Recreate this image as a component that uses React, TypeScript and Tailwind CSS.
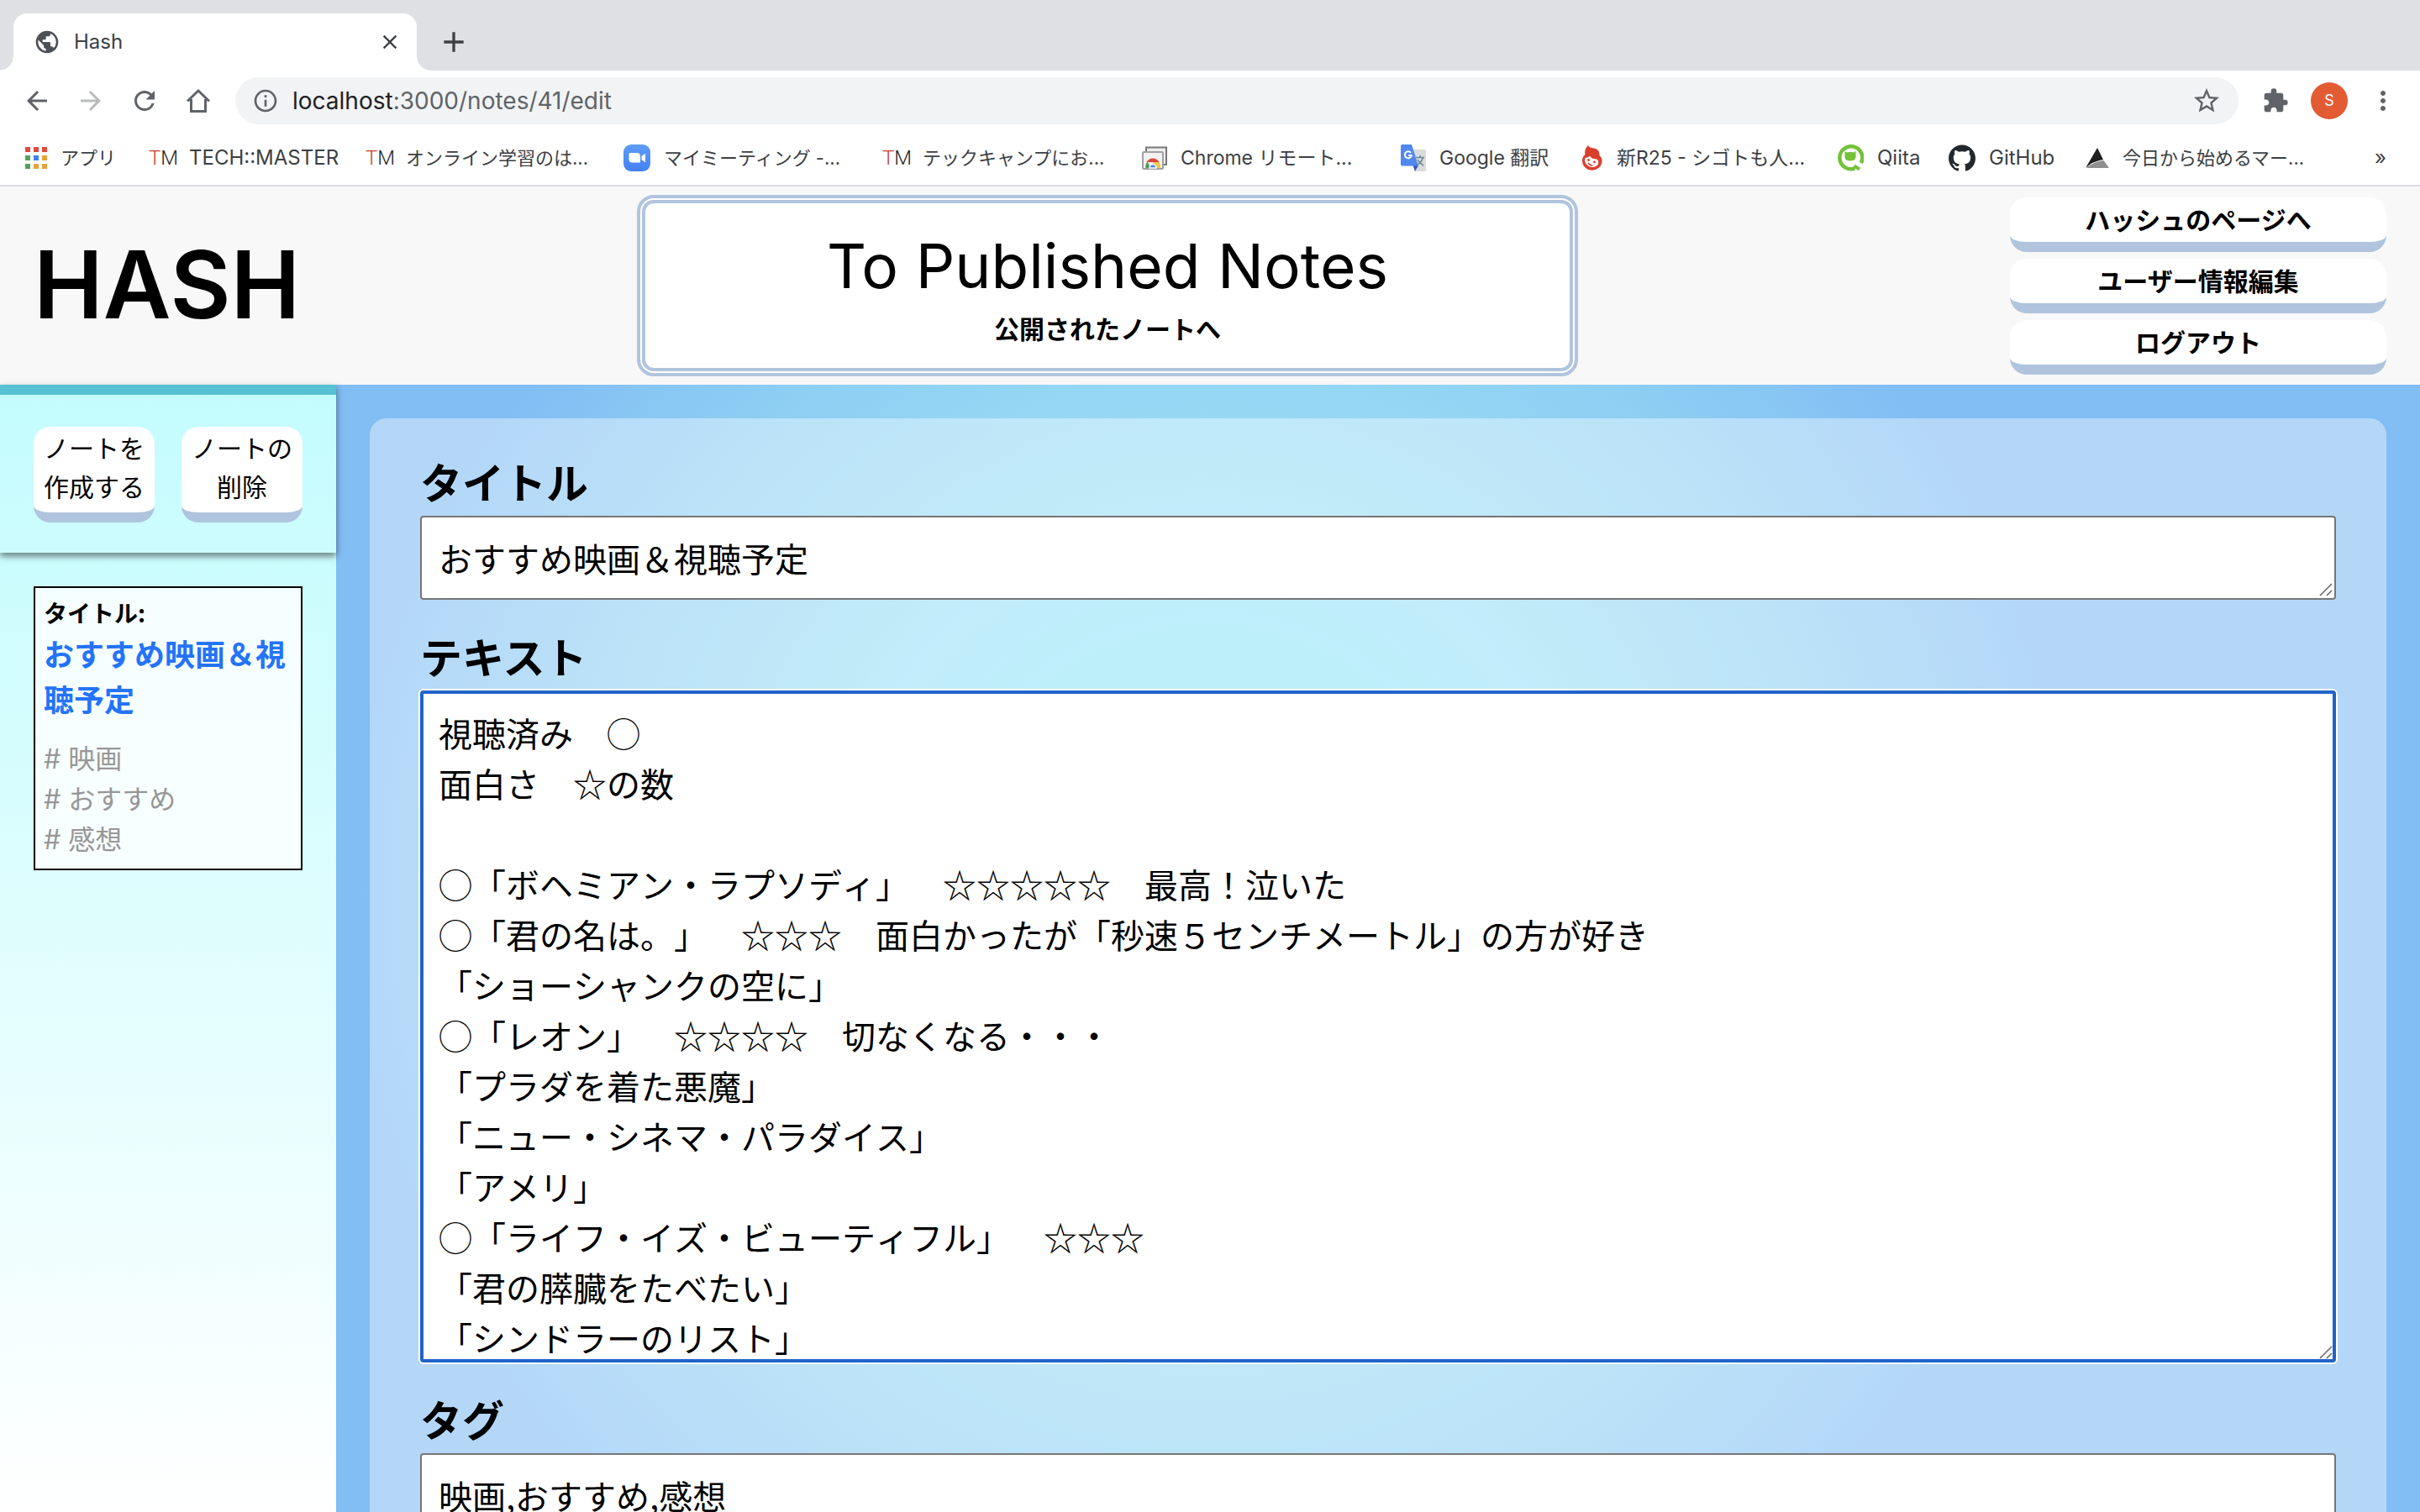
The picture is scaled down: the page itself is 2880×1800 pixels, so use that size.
import { useId, type ReactNode } from "react";
import { SiGithub } from "react-icons/si";
import { MdArrowBack, MdArrowForward, MdRefresh, MdInfoOutline, MdStarBorder, MdExtension, MdMoreVert, MdClose, MdAdd, MdPublic } from "react-icons/md";

function TechMaster() {
  return (
    <span aria-hidden="true" className="flex w-8 font-['Roboto'] text-2xl leading-8 font-light">
      <span className="text-[#c8402a]">T</span>
      <span className="text-[#222]">M</span>
    </span>
  );
}

function AppsIcon() {
  const colors = ["#e2483d", "#e2483d", "#e2483d", "#56a05a", "#3b82f0", "#e8a33a", "#56a05a", "#e8a33a", "#e8a33a"];
  return (
    <svg viewBox="0 0 26 26" className="size-[26px]">
      {colors.map((c, i) => (
        <rect key={i} x={(i % 3) * 10} y={Math.floor(i / 3) * 10} width="6" height="6" fill={c} />
      ))}
    </svg>
  );
}

function ZoomIcon() {
  return (
    <svg viewBox="0 0 32 32" className="size-8">
      <defs>
        <linearGradient id="zoomBlue" x1="0" y1="0" x2="0" y2="1">
          <stop offset="0" stopColor="#5d9df8" />
          <stop offset="1" stopColor="#4580f4" />
        </linearGradient>
      </defs>
      <rect width="32" height="32" rx="9" fill="url(#zoomBlue)" />
      <path d="M6.500 11.500q0-1.500 1.500-1.500h8q4 0 4 4v7.500H10.500q-4 0-4-4zM21.500 14l4-3q.5-.3.500.3v9.400q0 .6-.5.300l-4-3z" fill="#fff" />
    </svg>
  );
}

function RemoteDesktopIcon() {
  return (
    <svg viewBox="0 0 30 28" className="h-7 w-[30px]">
      <path d="M5 6V1.500h24V22h-4" fill="#eee" stroke="#767676" strokeWidth="2" strokeLinejoin="round" />
      <rect x="1" y="7" width="24" height="20" rx="1.500" fill="#f1f1f1" stroke="#a0a0a0" strokeWidth="2" />
      <path d="M4.500 26a9 9 0 0 1 2-7.500l4 7.500z" fill="#4a9c54" />
      <path d="M5.500 19a8.500 8.500 0 0 1 15 0z" fill="#d9483b" />
      <path d="M13 19h7.500q2 3.500 1.500 7h-8z" fill="#f3c64c" />
      <path d="M9 26a4 4.500 0 0 1 8 0z" fill="#4d86ee" stroke="#fff" strokeWidth="1.500" />
    </svg>
  );
}

function TranslateIcon() {
  return (
    <svg viewBox="0 0 30 32" className="h-8 w-[30px]">
      <path d="M12 6h16q2 0 2 2v22q0 2-2 2H17z" fill="#d9dbdd" />
      <path d="M18 15.500h10M23 13v2.500M26.500 15.500q-2 6-7 9M20 18q2 4 7 7" fill="none" stroke="#6d8893" strokeWidth="1.600" />
      <path d="M14.500 25H21l-4 7z" fill="#3a57bd" />
      <path d="M2 0h11l8 25.500H2q-2 0-2-2V2q0-2 2-2z" fill="#5088ee" />
      <path d="M12 9.800A4 4 0 1 0 12.800 13H9" fill="none" stroke="#fff" strokeWidth="2" />
    </svg>
  );
}

function R25Icon() {
  return (
    <svg viewBox="0 0 26 30" className="h-[30px] w-[26px]">
      <path d="M8 0Q9 3 15 3.500Q22 5 21.500 12Q25 15 24.500 19A11.500 11 0 0 1 1 18Q1 14 4.500 11Q3 5 8 0z" fill="#d93f2c" />
      <path d="M4.500 15q4-.5 5.500-2.500q2 4 8.500 4q2.500 2 1.500 6q-3 4-8 3.500q-6-1-8-7z" fill="#fff" />
      <circle cx="8.500" cy="17.500" r="1.400" fill="#d93f2c" />
      <circle cx="15.500" cy="20" r="1.400" fill="#d93f2c" />
      <path d="M8 21q2 3 5.500 3" stroke="#d93f2c" strokeWidth="1.500" fill="none" />
    </svg>
  );
}

function QiitaIcon() {
  return (
    <svg viewBox="0 0 32 32" className="size-8">
      <path d="M28.800 22A13.500 13.500 0 1 0 21.500 28.400" fill="none" stroke="#74c13a" strokeWidth="4.500" />
      <path d="M20.500 25.500l6.500 4" stroke="#74c13a" strokeWidth="4" />
      <path d="M9.500 8l3 1.500q3.500-1.500 7 0l3-1.500v4q1.500 7.500-6.500 7.500t-6.500-7.500z" fill="#74c13a" />
    </svg>
  );
}

function MountainIcon() {
  return (
    <svg viewBox="0 0 28 24" className="h-6 w-7">
      <path d="M14 0L0 24q8-8 21-10z" fill="#1e1e1e" />
      <path d="M21.500 15Q8 17 1 24h27z" fill="#8f8f8f" />
    </svg>
  );
}

function Bookmark({ icon, label, className }: { icon: ReactNode; label: string; className: string }) {
  return (
    <a href="#" className={`flex shrink-0 items-center gap-4 whitespace-nowrap ${className}`}>
      {icon}
      {label}
    </a>
  );
}

function BrowserChrome() {
  return (
    <div className="border-b-2 border-[#dcdce2] bg-white font-['Inter','Noto_Sans_CJK_JP',sans-serif] text-[#3c4043]">
      <div className="flex h-21 items-end bg-[#dee0e4]">
        <div className="relative ml-4 flex h-17 w-[480px] items-center rounded-t-2xl bg-white pr-[18px] pl-6 before:absolute before:bottom-0 before:-left-4 before:size-4 before:bg-[radial-gradient(circle_at_0_0,transparent_15px,white_16px)] after:absolute after:-right-4 after:bottom-0 after:size-4 after:bg-[radial-gradient(circle_at_100%_0,transparent_15px,white_16px)]">
          <MdPublic className="size-8 text-[#4d5156]" />
          <span className="ml-4 flex-1 text-2xl">Hash</span>
          <button aria-label="Close tab"><MdClose className="size-7" /></button>
        </div>
        <button aria-label="New tab" className="mb-3.5 ml-6"><MdAdd className="size-10" /></button>
      </div>
      <div className="flex h-18 items-center px-[26px] text-[#5f6368]">
        <div className="flex items-center gap-7">
          <button aria-label="Back"><MdArrowBack className="size-9" /></button>
          <button aria-label="Forward" className="text-[#b9bbbd]"><MdArrowForward className="size-9" /></button>
          <button aria-label="Reload"><MdRefresh className="size-9" /></button>
          <button aria-label="Home">
            <svg viewBox="0 0 36 36" className="size-9" fill="none" stroke="currentColor" strokeWidth="3">
              <path d="M5 18.500L18 6l13 12.500M9.500 16v14.500h17V16" />
            </svg>
          </button>
        </div>
        <div className="ml-[26px] flex h-14 flex-1 items-center rounded-full bg-[#f1f3f4] px-5">
          <MdInfoOutline className="size-8" />
          <span className="ml-4 flex-1 text-[28px] leading-9"><span className="text-[#202124]">localhost</span>:3000/notes/41/edit</span>
          <button aria-label="Bookmark this page"><MdStarBorder className="size-9" /></button>
        </div>
        <button aria-label="Extensions" className="ml-7"><MdExtension className="size-8" /></button>
        <button aria-label="Profile" className="ml-[26px] size-11 rounded-full bg-[#e25b33] text-lg text-white">S</button>
        <button aria-label="Menu" className="ml-6"><MdMoreVert className="size-9" /></button>
      </div>
      <nav className="flex h-16 items-center pr-6 pl-[30px] text-[22px]">
        <Bookmark icon={<AppsIcon />} label="アプリ" className="w-[147px]" />
        <Bookmark icon={<TechMaster />} label="TECH::MASTER" className="w-[258px] text-2xl" />
        <Bookmark icon={<TechMaster />} label="オンライン学習のは..." className="w-[307px]" />
        <Bookmark icon={<ZoomIcon />} label="マイミーティング -..." className="w-[308px]" />
        <Bookmark icon={<TechMaster />} label="テックキャンプにお..." className="w-[309px]" />
        <Bookmark icon={<RemoteDesktopIcon />} label="Chrome リモート..." className="w-[308px] text-[23px]" />
        <Bookmark icon={<TranslateIcon />} label="Google 翻訳" className="w-[215px] text-[23px]" />
        <Bookmark icon={<R25Icon />} label="新R25 - シゴトも人..." className="w-[304px] text-[23px]" />
        <Bookmark icon={<QiitaIcon />} label="Qiita" className="w-[133px] text-2xl" />
        <Bookmark icon={<SiGithub className="size-8 text-[#24292e]" />} label="GitHub" className="w-[163px] text-2xl" />
        <Bookmark icon={<MountainIcon />} label="今日から始めるマー..." className="w-[300px]" />
        <button aria-label="More bookmarks" className="ml-auto pr-4 text-2xl">»</button>
      </nav>
    </div>
  );
}

const links = ["ハッシュのページへ", "ユーザー情報編集", "ログアウト"];

function Header() {
  return (
    <header className="grid grid-cols-[718fr_1120fr_514fr_448fr] items-center bg-[#f8f8f8] px-10 py-2.5">
      <h1 className="pb-1 font-['Inter'] text-[111px] leading-none font-semibold">HASH</h1>
      <a href="#" className="rounded-[20px] border-4 border-[#b0c4de] bg-white p-0.5">
        <span className="flex h-[204px] flex-col items-center justify-center rounded-[14px] border-4 border-[#b0c4de] pt-2">
          <span className="font-['Inter'] text-[73px] leading-[92px]">To Published Notes</span>
          <span className="text-3xl leading-[54px] font-bold">公開されたノートへ</span>
        </span>
      </a>
      <nav className="col-start-4 flex flex-col gap-2">
        {links.map((label) => (
          <a key={label} href="#" className="rounded-[20px] border-b-12 border-[#b0c4de] bg-white pb-0.5 text-center text-3xl leading-[51px] font-bold">
            {label}
          </a>
        ))}
      </nav>
    </header>
  );
}

function Sidebar() {
  return (
    <aside className="w-[400px] shrink-0 bg-[linear-gradient(#c2fcfd,#ffffff)]">
      <div className="relative flex h-[200px] gap-8 border-t-12 border-[#57c0d3] bg-[linear-gradient(#c4fcfe,#cdfcfe)] px-10 pt-[38px] shadow-[0_4px_8px_rgba(0,0,0,0.5)]">
        <button className="h-[114px] flex-1 rounded-[20px] border-b-12 border-[#b0c4de] bg-white pb-2 text-3xl leading-[46px]">ノートを<br />作成する</button>
        <button className="h-[114px] flex-1 rounded-[20px] border-b-12 border-[#b0c4de] bg-white pb-2 text-3xl leading-[46px]">ノートの<br />削除</button>
      </div>
      <article className="mx-10 mt-10 border-2 border-black bg-white/80 px-2.5 pt-2 pb-2.5">
        <p className="text-[28px] leading-[42px] font-bold">タイトル:</p>
        <h2 className="text-4xl leading-[54px] font-bold text-[#2473fa]"><a href="#">おすすめ映画＆視聴予定</a></h2>
        <ul className="mt-[22px] font-['Inter','Noto_Sans_CJK_JP',sans-serif] text-[32px] leading-[48px] text-[#979797]">
          <li># 映画</li>
          <li># おすすめ</li>
          <li># 感想</li>
        </ul>
      </article>
    </aside>
  );
}

function Field({ label, value, className }: { label: string; value: string; className: string }) {
  const id = useId();
  return (
    <div className="relative flex flex-col">
      <label htmlFor={id} className="mb-2 text-[50px] leading-[68px] font-bold">{label}</label>
      <textarea id={id} defaultValue={value} className={`w-full resize-none overflow-hidden rounded bg-white text-[40px] leading-[60px] outline-none [font-kerning:none] [text-spacing-trim:space-all] ${className}`} />
      <svg viewBox="0 0 16 16" aria-hidden="true" className="pointer-events-none absolute right-1 bottom-1 size-4" stroke="#666" strokeWidth="1.500">
        <path d="M1 15L15 1M9 15l6-6" />
      </svg>
    </div>
  );
}

const body = `視聴済み　◯
面白さ　☆の数

◯「ボヘミアン・ラプソディ」　☆☆☆☆☆　最高！泣いた
◯「君の名は。」　☆☆☆　面白かったが「秒速５センチメートル」の方が好き
「ショーシャンクの空に」
◯「レオン」　☆☆☆☆　切なくなる・・・
「プラダを着た悪魔」
「ニュー・シネマ・パラダイス」
「アメリ」
◯「ライフ・イズ・ビューティフル」　☆☆☆
「君の膵臓をたべたい」
「シンドラーのリスト」`;

export default function App() {
  return (
    <div lang="ja" className="flex h-screen flex-col overflow-hidden bg-white font-['Noto_Sans_CJK_JP',sans-serif] text-black">
      <BrowserChrome />
      <Header />
      <div className="flex min-h-0 flex-1 bg-[radial-gradient(circle_at_50%_45%,#90e6f8_0,#91e4f9_300px,#9ae0f8_450px,#96d8f4_580px,#8ecff3_760px,#82bdf4_1020px)]">
        <Sidebar />
        <main className="flex-1 p-10">
          <form className="flex flex-col gap-8 rounded-[20px] bg-white/40 px-[60px] pt-10 pb-15">
            <Field label="タイトル" value="おすすめ映画＆視聴予定" className="h-[100px] border-2 border-[#767676] px-5 py-[18px]" />
            <Field label="テキスト" value={body} className="h-[800px] border-4 border-[#2163c8] px-[18px] py-4 shadow-[0_0_0_2px_white]" />
            <Field label="タグ" value="映画,おすすめ,感想" className="h-[100px] border-2 border-[#767676] px-5 py-[18px]" />
          </form>
        </main>
      </div>
    </div>
  );
}
